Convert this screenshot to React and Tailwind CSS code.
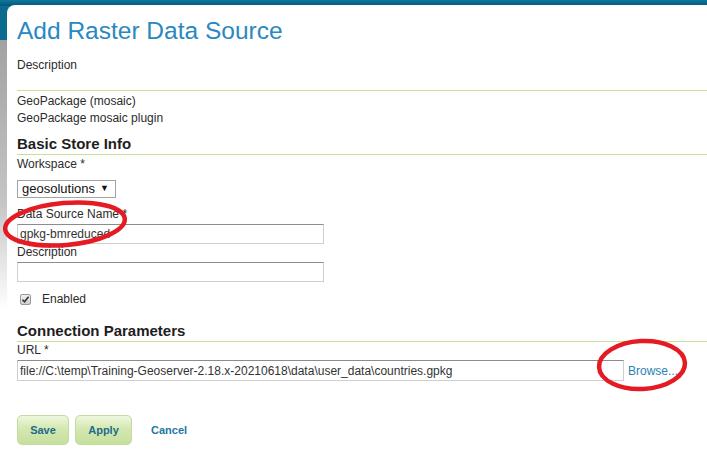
import React from "react";

function Label({ children }) {
    return <div className="h-[17px] leading-[17px] text-[12px] text-[#2b2b2b]">{children}</div>;
}

function SectionTitle({ children, className = "" }) {
    return (
        <div className={"border-b border-[#c6df9c] " + className}>
            <h3 className="h-[20px] leading-[20px] text-[15px] font-bold text-[#1e1e1e]">{children}</h3>
        </div>
    );
}

function TextBox({ value, width, height = "h-[20px]" }) {
    return (
        <div className={`${width} ${height} flex items-center px-[2px] bg-white border border-[#cfcfcf] border-t-[#8c8c8c] text-[12px] text-[#333] whitespace-nowrap overflow-hidden`}>
            {value}
        </div>
    );
}

function GreenButton({ children, width }) {
    return (
        <button className={`${width} h-[30px] rounded-[5px] border border-[#c3dba0] bg-[linear-gradient(to_bottom,#eef7de_0%,#d4e8b1_45%,#c6e09d_100%)] text-[11px] font-bold text-[#1c6b8d]`}>
            {children}
        </button>
    );
}

export default function App() {
    return (
        <div className="relative h-[459px] w-[707px] flex flex-col overflow-hidden font-['Liberation_Sans',Arial,sans-serif] bg-[linear-gradient(to_bottom,#0f779b_0px,#02577a_6px,#0a6b8f_6px,#0a6b8f_40px,#a2a2a2_40px,#c4c4c4_200px,#ffffff_310px)]">
            <div className="flex-1 ml-[7px] mt-[5px] bg-white rounded-tl-[8px] pl-[10px] pt-[6px]">
                <h2 className="h-[40px] leading-[40px] text-[24.5px] text-[#2a88c1]">Add Raster Data Source</h2>
                <div className="mt-[6px]"><Label>Description</Label></div>
                <div className="mt-[16px] h-px bg-[#c6df9c]" />
                <div className="mt-[2px]">
                    <Label>GeoPackage (mosaic)</Label>
                    <Label>GeoPackage mosaic plugin</Label>
                </div>

                <SectionTitle className="mt-[7px]">Basic Store Info</SectionTitle>
                <div className="mt-[1px]"><Label>Workspace *</Label></div>
                <div className="mt-[7px] w-[99px] h-[18px] flex items-center justify-between pl-[4px] pr-[6px] border border-[#a3a3a3] bg-white text-[13px] text-[#111]">
                    <span>geosolutions</span>
                    <span className="text-[9px]">▼</span>
                </div>

                <div className="mt-[8px]"><Label>Data Source Name *</Label></div>
                <div className="mt-[1px]"><TextBox value="gpkg-bmreduced" width="w-[307px]" /></div>
                <Label>Description</Label>
                <div className="mt-[1px]"><TextBox value="" width="w-[307px]" /></div>

                <div className="mt-[8px] h-[18px] flex items-center">
                    <div className="ml-[3px] w-[11px] h-[11px] rounded-[2px] border border-[#9a9a9a] bg-[linear-gradient(to_bottom,#f0f0f0,#cfcfcf)] flex items-center justify-center">
                        <svg width="9" height="9" viewBox="0 0 9 9">
                            <path d="M1.5 4.8 L3.5 6.8 L7.6 1.8" fill="none" stroke="#333" strokeWidth="1.6" />
                        </svg>
                    </div>
                    <span className="ml-[11px] text-[12px] text-[#2b2b2b]">Enabled</span>
                </div>

                <SectionTitle className="mt-[13px]">Connection Parameters</SectionTitle>
                <Label>URL *</Label>
                <div className="mt-[1px] flex items-center gap-[4px]">
                    <TextBox value="file://C:\temp\Training-Geoserver-2.18.x-20210618\data\user_data\countries.gpkg" width="w-[607px]" height="h-[21px]" />
                    <span className="text-[12px] text-[#2a82b5]">Browse...</span>
                </div>

                <div className="mt-[34px] flex items-center">
                    <GreenButton width="w-[52px]">Save</GreenButton>
                    <div className="ml-[6px]"><GreenButton width="w-[57px]">Apply</GreenButton></div>
                    <span className="ml-[19px] text-[11px] font-bold text-[#1c77a6]">Cancel</span>
                </div>
            </div>

            {/* red annotation marks drawn over the form */}
            <svg className="absolute inset-0 pointer-events-none" width="707" height="459">
                <ellipse cx="65" cy="224" rx="60" ry="21" transform="rotate(-5 65 224)" fill="none" stroke="#e51b24" strokeWidth="4.5" />
                <ellipse cx="642" cy="365" rx="43" ry="24" transform="rotate(-3 642 365)" fill="none" stroke="#e51b24" strokeWidth="4.5" />
            </svg>
        </div>
    );
}
